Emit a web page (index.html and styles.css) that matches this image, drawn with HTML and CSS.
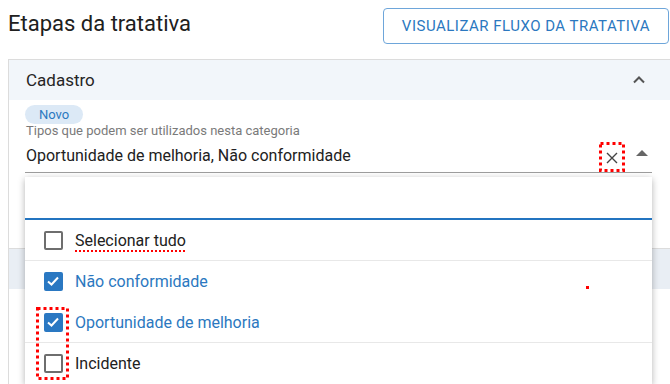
FILE: index.html
```html
<!DOCTYPE html>
<html lang="pt-BR">
<head>
    <meta charset="UTF-8">
    <meta name="viewport" content="width=device-width, initial-scale=1.0">
    <title>Etapas da tratativa</title>
    <link rel="stylesheet" href="styles.css">
</head>
<body>

<div class="page">
    <div class="topbar">
        <h1 class="title">Etapas da tratativa</h1>
        <button class="flowButton">Visualizar fluxo da tratativa</button>
    </div>

    <div class="panel">
        <div class="panelHead">
            <span>Cadastro</span>
            <svg class="chevron" width="24" height="24" viewBox="0 0 24 24">
                <polyline points="7,14.5 12,9.5 17,14.5" fill="none" stroke="#555" stroke-width="2"/>
            </svg>
        </div>
        <div class="panelBody">
            <span class="chip">Novo</span>
            <div class="field">
                <div class="fieldLabel">Tipos que podem ser utilizados nesta categoria</div>
                <div class="fieldInput">
                    <span class="fieldValue">Oportunidade de melhoria, Não conformidade</span>
                    <span class="clear">
                        <svg width="12" height="12" viewBox="0 0 12 12">
                            <path d="M1 1 L11 11 M11 1 L1 11" stroke="#444" stroke-width="1.4"/>
                        </svg>
                        <svg class="mark" width="26" height="30">
                            <rect x="1.5" y="1.5" width="23" height="27" fill="none" stroke="#f00" stroke-width="3" stroke-dasharray="3 3"/>
                        </svg>
                    </span>
                    <span class="caret"></span>
                </div>

                <div class="dropdown">
                    <div class="search"></div>
                    <ul class="options">
                        <li class="option separator">
                            <span class="checkbox"></span>
                            <span class="spelling">Selecionar tudo</span>
                        </li>
                        <li class="option selected">
                            <span class="checkbox"><svg width="18" height="18" viewBox="0 0 18 18"><polyline points="4,9.5 7.5,12.5 14,5.5" fill="none" stroke="#fff" stroke-width="2"/></svg></span>
                            <span>Não conformidade</span>
                        </li>
                        <li class="option selected separator">
                            <span class="checkbox"><svg width="18" height="18" viewBox="0 0 18 18"><polyline points="4,9.5 7.5,12.5 14,5.5" fill="none" stroke="#fff" stroke-width="2"/></svg></span>
                            <span>Oportunidade de melhoria</span>
                        </li>
                        <li class="option">
                            <span class="checkbox"></span>
                            <span>Incidente</span>
                        </li>
                    </ul>
                    <svg class="checkMark" width="33" height="73">
                        <rect x="1.5" y="1.5" width="30" height="70" fill="none" stroke="#f00" stroke-width="3" stroke-dasharray="3 3"/>
                    </svg>
                    <span class="dot"></span>
                </div>
            </div>
        </div>
    </div>

    <div class="panel panelNext">
        <div class="panelHead">
            <span>Tratativa</span>
        </div>
        <div class="panelBody">
            <div class="hiddenText">Responsável pela tratativa</div>
        </div>
    </div>
</div>

</body>
</html>
```

FILE: styles.css
```css
html, body {
    margin: 0;
    padding: 0;
    overflow: hidden;
    background-color: #ffffff;
}

body {
    font-family: Roboto, "Liberation Sans", sans-serif;
    color: #212121;
}

.page {
    width: 661px;
    padding-left: 8px;
}

.topbar {
    display: flex;
    justify-content: space-between;
    align-items: flex-start;
    padding-top: 8px;
    height: 51px;
}

.title {
    margin: 3px 0 0 0;
    font-size: 22px;
    font-weight: 400;
    line-height: 26px;
    color: #202020;
}

.flowButton {
    height: 36px;
    width: 286px;
    background-color: #ffffff;
    border: 1px solid #6ea6da;
    border-radius: 4px;
    color: #2b78c0;
    font-family: Roboto, "Liberation Sans", sans-serif;
    font-size: 15px;
    letter-spacing: 0.5px;
    text-transform: uppercase;
    cursor: pointer;
}

.panel {
    margin-right: -30px;
    border: 1px solid #dcdcdc;
    background-color: #ffffff;
}

.panelNext {
    border-top: none;
}

.panelHead {
    display: flex;
    align-items: center;
    justify-content: space-between;
    height: 40px;
    padding: 0 47px 0 17px;
    background-color: #f2f6fa;
    font-size: 17px;
    color: #252525;
}

.panelNext .panelHead {
    background-color: #e9eef4;
}

.chevron {
    display: block;
}

.panelBody {
    padding: 5px 46px 75px 16px;
}

.chip {
    display: block;
    width: fit-content;
    height: 19px;
    line-height: 19px;
    padding: 0 14px;
    border-radius: 10px;
    background-color: #dce9f6;
    color: #2b78c0;
    font-size: 13px;
}

.field {
    position: relative;
}

.fieldLabel {
    font-size: 13px;
    line-height: 16px;
    color: #7a7a7a;
    margin: -1px 0 3px 1px;
}

.fieldInput {
    display: flex;
    align-items: flex-start;
    height: 30px;
    border-bottom: 1px solid #9e9e9e;
}

.fieldValue {
    flex: 1;
    margin: 2px 0 0 1px;
    font-size: 16px;
    line-height: 24px;
}

.clear {
    position: relative;
    display: flex;
    align-items: center;
    justify-content: center;
    width: 26px;
    height: 30px;
    padding-top: 2px;
    box-sizing: border-box;
}

.mark {
    position: absolute;
    top: 0;
    left: 0;
}

.caret {
    width: 0;
    height: 0;
    margin: 8px 4px 0 11px;
    border-left: 6px solid transparent;
    border-right: 6px solid transparent;
    border-bottom: 6px solid #666666;
}

.dropdown {
    position: absolute;
    top: calc(100% + 4px);
    left: 0;
    right: 0;
    background-color: #ffffff;
    box-shadow: 0 2px 7px rgba(0, 0, 0, 0.3);
    z-index: 2;
}

.search {
    height: 41px;
    border-bottom: 2px solid #2374c0;
}

.options {
    list-style: none;
    margin: 0;
    padding: 0;
}

.option {
    display: flex;
    align-items: center;
    gap: 12px;
    height: 40px;
    padding-left: 19px;
    border-bottom: 1px solid transparent;
    font-size: 16px;
    color: #212121;
}

.option.separator {
    border-bottom-color: #e8e8e8;
}

.option.selected {
    color: #2b78c0;
}

.checkbox {
    width: 15px;
    height: 15px;
    border: 2px solid #6e6e6e;
    border-radius: 2px;
    flex-shrink: 0;
}

.checkbox svg {
    display: block;
    margin: -2px;
}

.selected .checkbox {
    background-color: #2a78c2;
    border-color: #2a78c2;
}

.spelling {
    position: relative;
}

.spelling::after {
    content: "";
    position: absolute;
    left: 0;
    right: 0;
    bottom: -2px;
    height: 2px;
    background: repeating-linear-gradient(90deg, #f00 0 2px, transparent 2px 4px);
}

.checkMark {
    position: absolute;
    top: 130px;
    left: 11px;
}

.dot {
    position: absolute;
    top: 109px;
    left: 561px;
    width: 3px;
    height: 3px;
    background-color: #f00;
}

.hiddenText {
    padding-top: 84px;
    font-size: 13px;
    color: #8a8a8a;
}
```
